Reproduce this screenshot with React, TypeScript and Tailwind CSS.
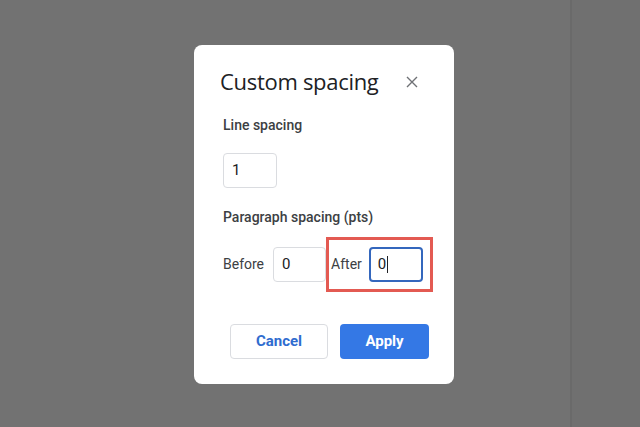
import React from "react";

export default function App() {
  const font = { fontFamily: "Roboto, 'Liberation Sans', sans-serif" };
  return (
    <div className="w-[640px] h-[427px] bg-[#727272] flex overflow-hidden" style={font}>
      <div className="w-[570px] h-full pl-[194px] pt-[45px]">
        <div className="w-[260px] h-[339px] bg-white rounded-[8px] flex flex-col pl-[29px]">
          <div className="flex items-center mt-[22px]">
            <div className="-ml-[3px] text-[22px] leading-[28px] text-[#202124]" style={{ fontFamily: "'Open Sans', Roboto, sans-serif", letterSpacing: "-0.3px" }}>
              Custom spacing
            </div>
            <svg className="ml-[27px] mt-[2px]" width="12" height="12" viewBox="0 0 12 12">
              <path d="M1 1 L11 11 M11 1 L1 11" stroke="#6f7175" strokeWidth="1.4" fill="none" />
            </svg>
          </div>
          <div className="mt-[20px] text-[14px] leading-[20px] font-medium text-[#3c4043]">Line spacing</div>
          <div className="mt-[18px] w-[54px] h-[35px] border border-[#dadce0] rounded-[4px] flex items-center pl-[8px] text-[15px] text-[#202124]">
            1
          </div>
          <div className="mt-[19px] text-[14px] leading-[20px] font-medium text-[#3c4043]">Paragraph spacing (pts)</div>
          <div className="mt-[10px] flex items-center h-[55px]">
            <span className="text-[14px] text-[#3c4043]">Before</span>
            <div className="ml-[9px] w-[53px] h-[35px] border border-[#dadce0] rounded-[4px] flex items-center pl-[8px] text-[15px] text-[#202124]">
              0
            </div>
            <div className="h-[55px] w-[107px] border-[3px] border-[#e35a52] flex items-center pl-[2px]">
              <span className="text-[14px] text-[#3c4043]">After</span>
              <div className="ml-[7px] w-[54px] h-[35px] border-2 border-[#3467bd] rounded-[4px] flex items-center pl-[7px] text-[15px] text-[#202124]">
                0<span className="inline-block w-[1px] h-[17px] bg-[#202124] ml-[1px]"></span>
              </div>
            </div>
          </div>
          <div className="mt-[32px] ml-[7px] flex gap-[12px]">
            <div className="w-[98px] h-[35px] border border-[#dadce0] rounded-[4px] flex items-center justify-center text-[15px] font-bold text-[#2f6ccf]">
              Cancel
            </div>
            <div className="w-[89px] h-[35px] bg-[#3478e5] rounded-[4px] flex items-center justify-center text-[15px] font-bold text-white">
              Apply
            </div>
          </div>
        </div>
      </div>
      <div className="w-[2px] h-full bg-[#6a6a6a]"></div>
      <div className="flex-1 h-full bg-[#707070]"></div>
    </div>
  );
}
